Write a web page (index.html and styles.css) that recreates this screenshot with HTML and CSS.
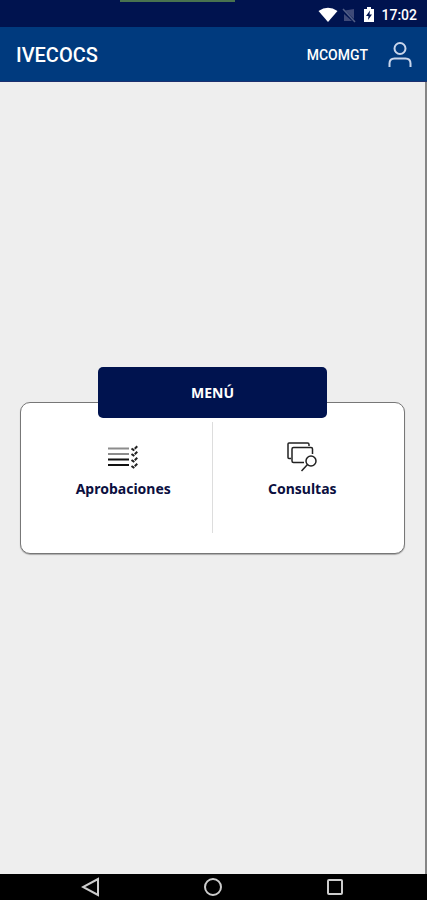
FILE: index.html
```html
<!DOCTYPE html>
<html lang="es">
<head>
<meta charset="utf-8">
<meta name="viewport" content="width=device-width, initial-scale=1">
<title>IVECOCS</title>
<link rel="stylesheet" href="styles.css">
</head>
<body>
<div class="screen">
  <div class="status">
    <span class="status-strip"></span>
    <svg class="wifi" width="20" height="16" viewBox="0 0 20 16"><path d="M.5 4Q10-2.500 19.500 4L10 15z" fill="#fff"/></svg>
    <svg class="signal" width="14" height="16" viewBox="0 0 14 16"><path d="M12 2v10L3 3.500zM2 14V7l8 7z" fill="#3f4a78"/><path d="M1 2l12 13" stroke="#536087" stroke-width="1.500"/></svg>
    <svg class="battery" width="12" height="16" viewBox="0 0 12 16"><path d="M1 2h3V0h4v2h3v13H1z" fill="#fff"/><path d="M7 3.500L3 9h2.500L5 13l4-5.500H6.500z" fill="#00134f"/></svg>
    <span class="clock">17:02</span>
  </div>
  <header class="appbar">
    <h1 class="title">IVECOCS</h1>
    <span class="user">MCOMGT</span>
    <button class="profile" type="button" aria-label="Perfil">
      <svg width="24" height="26" viewBox="0 0 24 26" fill="none" stroke="#c9d6ec" stroke-width="2"><circle cx="12" cy="6.500" r="5.500"/><path d="M1.500 25v-3.500q0-5 5-5h11q5 0 5 5V25"/></svg>
    </button>
  </header>
  <main class="content">
    <section class="card">
      <h2 class="card-title">MENÚ</h2>
      <nav class="options">
        <a class="option" href="#aprobaciones">
          <svg width="30" height="30" viewBox="0 0 30 30" fill="none"><path d="M0 6.500h21M0 12h21" stroke="#8c8c8c" stroke-width="2"/><path d="M0 17.500h21M0 23h21" stroke="#111" stroke-width="2"/><path d="M23.500 6.500l2 1.500 4-4M23.500 12l2 1.500 4-4M23.500 18l2 1.500 4-4M23.500 24l2 1.500 4-4" stroke="#222" stroke-width="2" stroke-dasharray="3.500 .8"/></svg>
          <span>Aprobaciones</span>
        </a>
        <a class="option" href="#consultas">
          <svg width="30" height="30" viewBox="0 0 30 30" fill="none" stroke="#222" stroke-width="1.500"><path d="M4 16.500H2q-1 0-1-1V2q0-1 1-1h18.500q1.500 0 1.500 1.500V4"/><path d="M17 20.500H6.500q-1.500 0-1.500-1.500V7q0-1.500 1.500-1.500H24q1.500 0 1.500 1.500v5"/><circle cx="24" cy="19" r="5"/><path d="M20.500 22.500L14.500 29"/></svg>
          <span>Consultas</span>
        </a>
      </nav>
    </section>
  </main>
  <div class="navbar">
    <button type="button" aria-label="Atrás"><svg width="20" height="20" viewBox="0 0 20 20"><path d="M17 2v16L2 10z"/></svg></button>
    <button type="button" aria-label="Inicio"><svg width="20" height="20" viewBox="0 0 20 20"><circle cx="10" cy="10" r="8"/></svg></button>
    <button type="button" aria-label="Recientes"><svg width="20" height="20" viewBox="0 0 20 20"><rect x="3" y="3" width="14" height="14" rx="1"/></svg></button>
  </div>
</div>
</body>
</html>
```
FILE: styles.css
```css
* {
  box-sizing: border-box;
}

body {
  margin: 0;
  font-family: Roboto, "Liberation Sans", sans-serif;
  background: #eee;
}

.screen {
  display: flex;
  flex-direction: column;
  min-height: 100vh;
}

.status {
  position: relative;
  display: flex;
  align-items: center;
  justify-content: flex-end;
  height: 27px;
  padding: 2px 10px 0 0;
  background: #00134f;
  color: #fff;
}

.status-strip {
  position: absolute;
  top: 0;
  left: 28%;
  width: 27%;
  height: 2px;
  background: #49734f;
}

.signal {
  margin-left: 4px;
}

.battery {
  margin: 0 6px 0 7px;
}

.clock {
  font-size: 14px;
  font-weight: 500;
}

.appbar {
  display: flex;
  align-items: center;
  height: 55px;
  padding: 2px 15px 0 16px;
  background: #003a7e;
  border-bottom: 1px solid #1c2f6e;
  color: #fff;
}

.title {
  flex: 1;
  margin: 0;
  font-size: 20px;
  font-weight: 500;
}

.user {
  font-size: 14px;
  font-weight: 500;
}

.profile {
  display: flex;
  margin-left: 20px;
  padding: 0;
  border: 0;
  background: none;
}

.content {
  flex: 1;
  display: flex;
  align-items: center;
  padding: 0 20px;
  border-right: 2px solid #858585;
}

.card {
  flex: 1;
  padding-bottom: 20px;
  border: 1px solid #777;
  border-radius: 10px;
  background: #fff;
  box-shadow: 0 1px 1px #aaa;
  font-family: "Noto Sans", sans-serif;
}

.card-title {
  width: 60%;
  margin: -36px auto 4px;
  border-radius: 5px;
  background: #00134f;
  color: #fff;
  font-size: 14px;
  line-height: 51px;
  text-align: center;
}

.options {
  display: grid;
  grid-template-columns: 1fr 1fr;
}

.option {
  display: flex;
  flex-direction: column;
  align-items: center;
  height: 111px;
  padding: 20px 12px 0 0;
  color: #0b0f40;
  font-size: 14px;
  font-weight: 700;
  line-height: 18px;
  text-decoration: none;
}

.option:first-child {
  padding: 20px 0 0 14px;
  border-right: 1px solid #ddd;
}

.option svg {
  margin-bottom: 8px;
}

.navbar {
  display: flex;
  align-items: center;
  justify-content: center;
  gap: 102px;
  height: 26px;
  padding-right: 2px;
  background: #000;
}

.navbar button {
  display: flex;
  padding: 0;
  border: 0;
  background: none;
}

.navbar svg {
  fill: none;
  stroke: #ccc;
  stroke-width: 2;
}
```
